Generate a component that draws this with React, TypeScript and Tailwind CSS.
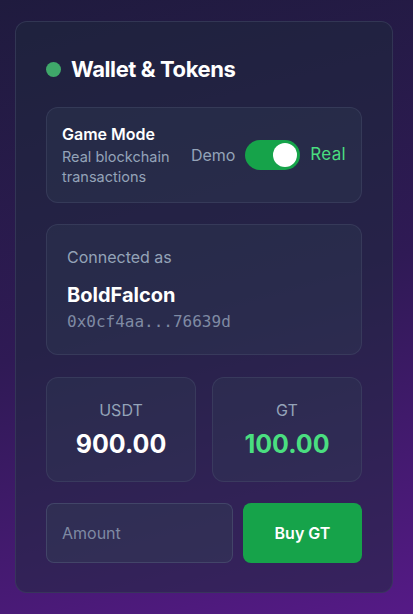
import React from "react";

export default function App() {
  return (
    <div
      className="w-[413px] h-[614px] overflow-hidden bg-[linear-gradient(165deg,#1f1b3e_0%,#2f1a55_50%,#551a86_100%)] pt-[21px] pl-[15px] pr-[20px]"
      style={{ fontFamily: "Inter, 'Liberation Sans', sans-serif" }}
    >
      <div className="w-[378px] h-[572px] rounded-[12px] border border-[#3a3f5c]/70 bg-[#1e293b]/50 px-[30px] pt-[29px]">
        <div className="flex h-[36px] items-center gap-[10px]">
          <span className="h-[15px] w-[15px] rounded-full bg-[#3fa86a]" />
          <span className="text-[22px] font-bold tracking-[-0.4px] text-white">Wallet &amp; Tokens</span>
        </div>

        <div className="mt-[20px] flex h-[96px] items-center justify-between rounded-[12px] border border-[#4a5070]/40 bg-[#334155]/30 pl-[15px] pr-[15px]">
          <div className="flex flex-col">
            <span className="text-[16px] font-semibold leading-[22px] text-white">Game Mode</span>
            <span className="mt-[2px] w-[116px] text-[14.5px] leading-[20px] text-[#94a3b8]">Real blockchain transactions</span>
          </div>
          <div className="flex items-center gap-[10px]">
            <span className="text-[16px] text-[#94a3b8]">Demo</span>
            <div className="flex h-[30px] w-[55px] items-center justify-end rounded-full bg-[#16a34a] pr-[3px]">
              <span className="h-[24px] w-[24px] rounded-full bg-white" />
            </div>
            <span className="text-[17px] tracking-[0.3px] text-[#4ade80]">Real</span>
          </div>
        </div>

        <div className="mt-[21px] flex h-[131px] flex-col rounded-[12px] border border-[#4a5070]/40 bg-[#334155]/30 px-[20px] pt-[20px]">
          <span className="text-[16px] leading-[24px] text-[#94a3b8]">Connected as</span>
          <span className="mt-[12px] text-[20px] font-bold leading-[28px] text-white">BoldFalcon</span>
          <span
            className="mt-[3px] text-[16px] leading-[20px] text-[#7f8aa3]"
            style={{ fontFamily: "'DejaVu Sans Mono', monospace" }}
          >
            0x0cf4aa...76639d
          </span>
        </div>

        <div className="mt-[22px] grid grid-cols-2 gap-[16px]">
          <div className="flex h-[105px] flex-col items-center rounded-[12px] border border-[#4a5070]/40 bg-[#334155]/30 pt-[20px]">
            <span className="text-[16px] leading-[24px] text-[#94a3b8]">USDT</span>
            <span className="mt-[6px] text-[25px] font-bold leading-[32px] text-white">900.00</span>
          </div>
          <div className="flex h-[105px] flex-col items-center rounded-[12px] border border-[#4a5070]/40 bg-[#334155]/30 pt-[20px]">
            <span className="text-[16px] leading-[24px] text-[#94a3b8]">GT</span>
            <span className="mt-[6px] text-[25px] font-bold leading-[32px] text-[#4ade80]">100.00</span>
          </div>
        </div>

        <div className="mt-[21px] flex gap-[10px]">
          <input
            placeholder="Amount"
            className="h-[60px] w-[187px] rounded-[8px] border border-[#4a5070]/70 bg-[#334155]/40 px-[15px] text-[16px] text-white outline-none placeholder:text-[#7f8aa3]"
          />
          <button className="h-[60px] w-[119px] rounded-[8px] bg-[#16a34a] text-[16px] font-semibold text-white">
            Buy GT
          </button>
        </div>
      </div>
    </div>
  );
}
